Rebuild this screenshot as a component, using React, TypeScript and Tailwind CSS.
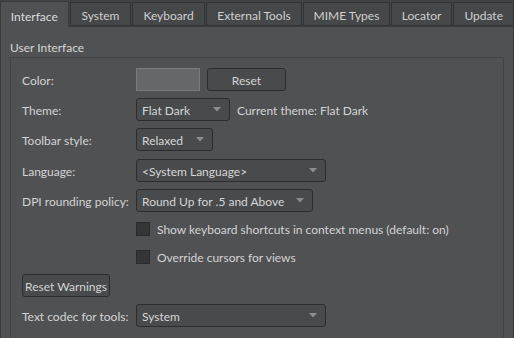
import React from "react"

const tabs = [
  { label: "Interface", w: "w-[69px]", active: true },
  { label: "System", w: "w-[62px]" },
  { label: "Keyboard", w: "w-[73px]" },
  { label: "External Tools", w: "w-[97px]" },
  { label: "MIME Types", w: "w-[87px]" },
  { label: "Locator", w: "w-[62px]" },
  { label: "Update", w: "w-[61px]" },
]

const Arrow = () => (
  <svg width="8" height="5" viewBox="0 0 8 5" className="shrink-0">
    <path d="M0 0 L8 0 L4 4.5 Z" fill="#8c8d8f" />
  </svg>
)

const Combo = ({ text, w }: { text: string; w: string }) => (
  <div
    className={`${w} h-[23px] flex items-center justify-between pl-[5px] pr-[8px] rounded-[3px] border border-[#2c2d2f] bg-[#484a4c] text-[#d6d6d6]`}
  >
    <span className="whitespace-nowrap pt-[3px]">{text}</span>
    <Arrow />
  </div>
)

const Check = ({ text }: { text: string }) => (
  <div className="flex items-center gap-[7px] h-[23px]">
    <div className="w-[14px] h-[14px] bg-[#343537] border border-[#2a2b2d]" />
    <span className="whitespace-nowrap pt-[3px]">{text}</span>
  </div>
)

const Label = ({ children }: { children: React.ReactNode }) => (
  <div className="w-[114px] shrink-0 whitespace-nowrap pt-[3px]">{children}</div>
)

export default function App() {
  return (
    <div
      className="w-[514px] h-[338px] overflow-hidden bg-[#414244] text-[12px] text-[#d4d4d4] leading-none"
      style={{ fontFamily: 'Lato, "Open Sans", sans-serif' }}
    >
      <div className="flex h-[26px] items-end">
        {tabs.map((t) =>
          t.active ? (
            <div
              key={t.label}
              className={`${t.w} h-[26px] pt-[4px] flex items-center justify-center border border-b-0 border-[#3a3b3d] bg-[#505153] text-[#dcdcdc] relative z-10 -mb-px`}
            >
              {t.label}
            </div>
          ) : (
            <div
              key={t.label}
              className={`${t.w} h-[24px] pt-[3px] flex items-center justify-center border border-[#333436] bg-[#464749] ml-[1px] text-[#d0d0d0]`}
            >
              {t.label}
            </div>
          )
        )}
      </div>
      <div className="h-[313px] border border-[#3a3b3d] bg-[#505153] px-[9px] pt-[13px]">
        <div className="text-[#d6d6d6] h-[17px] pt-[2px]">User Interface</div>
        <div className="h-[300px] border border-[#424345] border-b-0 px-[11px] pt-[10px]">
          <div className="flex items-center h-[23px]">
            <Label>Color:</Label>
            <div className="w-[64px] h-[23px] bg-[#666769] border border-[#7a7b7d]" />
            <div className="ml-[7px] w-[79px] h-[23px] flex items-center justify-center rounded-[3px] border border-[#2c2d2f] bg-[#484a4c]">
              <span className="pt-[3px]">Reset</span>
            </div>
          </div>
          <div className="flex items-center h-[23px] mt-[7px]">
            <Label>Theme:</Label>
            <Combo text="Flat Dark" w="w-[94px]" />
            <span className="ml-[7px] pt-[3px]">Current theme: Flat Dark</span>
          </div>
          <div className="flex items-center h-[23px] mt-[7px]">
            <Label>Toolbar style:</Label>
            <Combo text="Relaxed" w="w-[77px]" />
          </div>
          <div className="flex items-center h-[23px] mt-[8px]">
            <Label>Language:</Label>
            <Combo text="<System Language>" w="w-[190px]" />
          </div>
          <div className="flex items-center h-[23px] mt-[7px]">
            <Label>DPI rounding policy:</Label>
            <Combo text="Round Up for .5 and Above" w="w-[177px]" />
          </div>
          <div className="pl-[114px] mt-[5px]">
            <Check text="Show keyboard shortcuts in context menus (default: on)" />
          </div>
          <div className="pl-[114px] mt-[5px]">
            <Check text="Override cursors for views" />
          </div>
          <div className="mt-[6px] w-[88px] h-[23px] flex items-center justify-center whitespace-nowrap rounded-[3px] border border-[#2c2d2f] bg-[#484a4c]">
            <span className="pt-[3px]">Reset Warnings</span>
          </div>
          <div className="flex items-center h-[23px] mt-[7px]">
            <Label>Text codec for tools:</Label>
            <Combo text="System" w="w-[190px]" />
          </div>
        </div>
      </div>
    </div>
  )
}
